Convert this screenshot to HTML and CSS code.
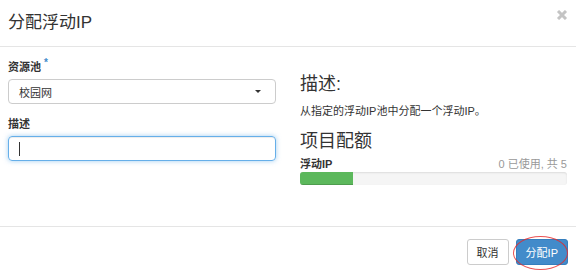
FILE: index.html
```html
<!DOCTYPE html>
<html>
<head>
    <title>分配浮动IP</title>
    <link rel="stylesheet" href="styles.css">
</head>
<body>
    <div class="modal">
        <div class="modal-header">
            <h3 class="modal-title">分配浮动IP</h3>
            <span class="close">
                <svg width="12" height="10" viewBox="0 0 12 10">
                    <path d="M2 1 L10 9 M10 1 L2 9" stroke="#c4c4c4" stroke-width="3"/>
                </svg>
            </span>
        </div>

        <div class="modal-body">
            <div class="left">
                <label class="field-label">资源池<span class="required">*</span></label>
                <div class="select">
                    <span>校园网</span>
                    <span class="caret"></span>
                </div>

                <label class="field-label">描述</label>
                <div class="input focused"><span class="cursor"></span></div>
            </div>

            <div class="right">
                <h3>描述:</h3>
                <p>从指定的浮动IP池中分配一个浮动IP。</p>

                <h3 class="quota-title">项目配额</h3>
                <div class="quota-row">
                    <strong>浮动IP</strong>
                    <span class="quota-count">0 已使用, 共 5</span>
                </div>
                <div class="progress">
                    <div class="progress-bar" style="width: 20%"></div>
                </div>
            </div>
        </div>

        <div class="modal-footer">
            <button class="btn">取消</button>
            <span class="primary-wrap">
                <button class="btn btn-primary">分配IP</button>
                <span class="mark"></span>
            </span>
        </div>
    </div>
</body>
</html>
```

FILE: styles.css
```css
body {
    margin: 0;
    font-family: "Liberation Sans", "Noto Sans CJK SC", sans-serif;
    font-size: 11px;
    color: #333;
    background-color: #fff;
}

.modal {
    width: 576px;
    height: 273px;
    display: flex;
    flex-direction: column;
}

.modal-header {
    height: 47px;
    padding: 11px 8px 0 8px;
    box-sizing: border-box;
    border-bottom: 1px solid #e5e5e5;
    display: flex;
    justify-content: space-between;
    align-items: flex-start;
}

.modal-title {
    margin: 0;
    font-size: 17px;
    font-weight: normal;
    line-height: 24px;
}

.close {
    margin-top: -1px;
    width: 12px;
    height: 10px;
    display: block;
}

.close svg {
    display: block;
}

.modal-body {
    height: 179px;
    box-sizing: border-box;
    padding: 13px 9px 0 8px;
    display: grid;
    grid-template-columns: 268px 267px;
    column-gap: 24px;
}

.field-label {
    display: block;
    font-weight: bold;
    line-height: 15px;
    margin-bottom: 4px;
}

.required {
    color: #428bca;
    font-size: 10px;
    position: relative;
    top: -5px;
    left: 3px;
}

.select, .input {
    height: 25px;
    box-sizing: border-box;
    border: 1px solid #ccc;
    border-radius: 4px;
    display: flex;
    align-items: center;
    padding: 0 10px;
    margin-bottom: 13px;
}

.select {
    justify-content: space-between;
}

.caret {
    width: 0;
    height: 0;
    border-left: 3px solid transparent;
    border-right: 3px solid transparent;
    border-top: 3px solid #333;
    margin-right: 4px;
}

.input.focused {
    border-color: #66afe9;
    box-shadow: inset 0 1px 1px rgba(0, 0, 0, 0.075), 0 0 5px rgba(102, 175, 233, 0.6);
}

.cursor {
    display: block;
    width: 1px;
    height: 14px;
    background-color: #333;
}

.right {
    padding-top: 13px;
}

.right h3 {
    margin: 0;
    font-size: 18px;
    font-weight: normal;
    line-height: 22px;
}

.right p {
    margin: 9px 0 0 0;
    line-height: 15px;
}

.right .quota-title {
    margin-top: 11px;
}

.quota-row {
    display: flex;
    justify-content: space-between;
    line-height: 15px;
    margin-top: 5px;
}

.quota-count {
    color: #999;
}

.progress {
    height: 13px;
    background-color: #f5f5f5;
    border-radius: 3px;
    box-shadow: inset 0 1px 2px rgba(0, 0, 0, 0.1);
    overflow: hidden;
}

.progress-bar {
    height: 100%;
    background-color: #5cb85c;
    box-shadow: inset 0 -1px 0 rgba(0, 0, 0, 0.15);
}

.modal-footer {
    border-top: 1px solid #e5e5e5;
    flex: 1;
    display: flex;
    justify-content: flex-end;
    align-items: flex-start;
    padding: 12px 8px 0 0;
    gap: 7px;
}

.btn {
    height: 26px;
    padding: 0 9px;
    font-family: inherit;
    font-size: 11px;
    color: #333;
    background-color: #fff;
    border: 1px solid #ccc;
    border-radius: 3px;
    cursor: pointer;
}

.btn-primary {
    color: #fff;
    background-color: #428bca;
    border-color: #357ebd;
}

.primary-wrap {
    position: relative;
    display: block;
}

.primary-wrap .btn {
    display: block;
}

.mark {
    position: absolute;
    left: -3px;
    top: -3px;
    width: 53px;
    height: 32px;
    border: 1px solid rgba(230, 40, 40, 0.8);
    border-radius: 50%;
}
```
